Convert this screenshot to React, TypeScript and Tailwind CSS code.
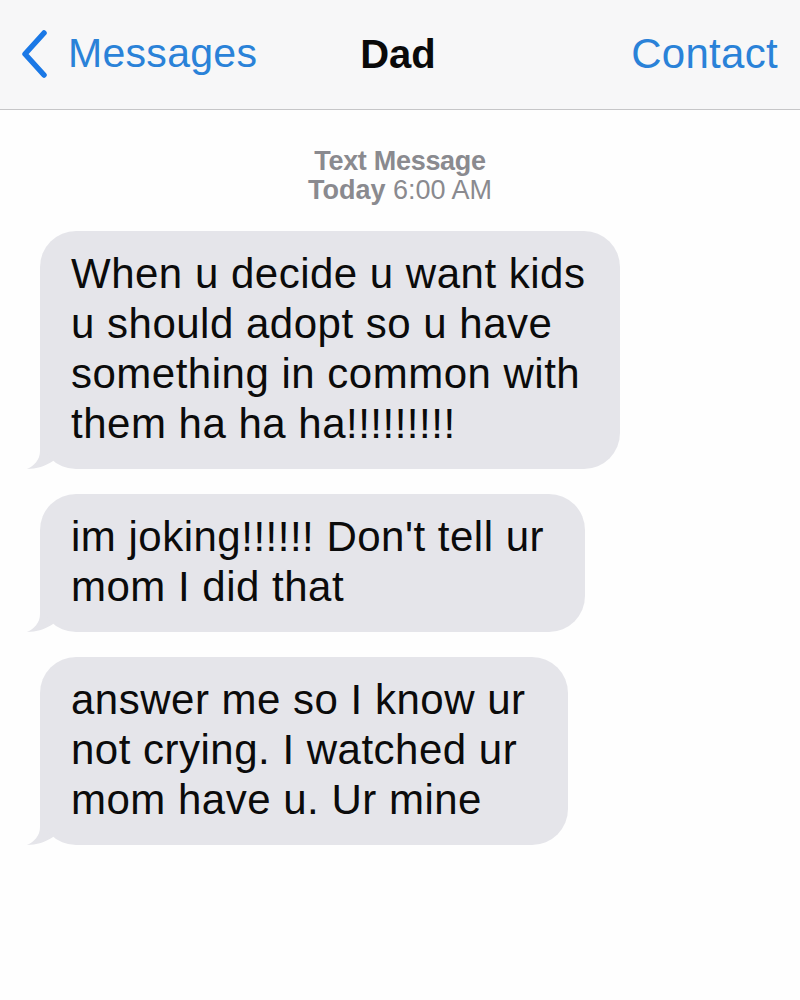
import React from "react";

function Tail() {
  return (
    <svg
      className="absolute left-[-14px] bottom-0"
      width="50"
      height="42"
      viewBox="0 0 50 42"
    >
      <path
        d="M14 0 L14 24 C14 33 8 39 1 42 C10 42 20 39 27 34 L50 6 L50 0 Z"
        fill="#e5e5ea"
      />
    </svg>
  );
}

function Bubble({ lines, width }: { lines: string[]; width: string }) {
  return (
    <div className={`relative ${width}`}>
      <div className="relative z-10 rounded-[36px] bg-[#e5e5ea] pl-[31px] pr-4 pt-[18px] pb-[20px] text-[42px] leading-[50px] tracking-[0.5px] text-[#0b0b0b]">
        {lines.map((l, i) => (
          <div key={i} className="whitespace-nowrap">
            {l}
          </div>
        ))}
      </div>
      <Tail />
    </div>
  );
}

export default function App() {
  return (
    <div
      className="w-[800px] min-h-[1000px] bg-[#fefefe]"
      style={{ fontFamily: '"Liberation Sans", Arial, sans-serif' }}
    >
      <header className="h-[110px] bg-[#f7f7f8] border-b border-[#c6c6c8] flex items-center justify-between pl-[18px] pr-[22px] pb-[2px]">
        <div className="flex items-center gap-[18px] w-[280px]">
          <svg width="32" height="48" viewBox="0 0 32 48">
            <path
              d="M26 3 L7 24 L26 45"
              fill="none"
              stroke="#1a78e6"
              strokeWidth="5.5"
              strokeLinecap="round"
              strokeLinejoin="round"
            />
          </svg>
          <span className="text-[41px] text-[#2a82d8] tracking-[0.3px]">Messages</span>
        </div>
        <span className="text-[40px] font-bold text-[#0a0a0a]">Dad</span>
        <div className="w-[280px] flex justify-end">
          <span className="text-[42px] text-[#2a82d8] tracking-[0.3px]">Contact</span>
        </div>
      </header>

      <div className="mt-[37px] flex flex-col items-center text-[27px] leading-[29px] text-[#8a8a8f]">
        <div className="font-bold tracking-[-0.3px]">Text Message</div>
        <div>
          <span className="font-bold">Today</span> 6:00 AM
        </div>
      </div>

      <div className="mt-[26px] pl-[40px] flex flex-col gap-[25px]">
        <Bubble
          width="w-[580px]"
          lines={[
            "When u decide u want kids",
            "u should adopt so u have",
            "something in common with",
            "them ha ha ha!!!!!!!!!",
          ]}
        />
        <Bubble
          width="w-[545px]"
          lines={["im joking!!!!!! Don't tell ur", "mom I did that"]}
        />
        <Bubble
          width="w-[528px]"
          lines={[
            "answer me so I know ur",
            "not crying. I watched ur",
            "mom have u. Ur mine",
          ]}
        />
      </div>
    </div>
  );
}
